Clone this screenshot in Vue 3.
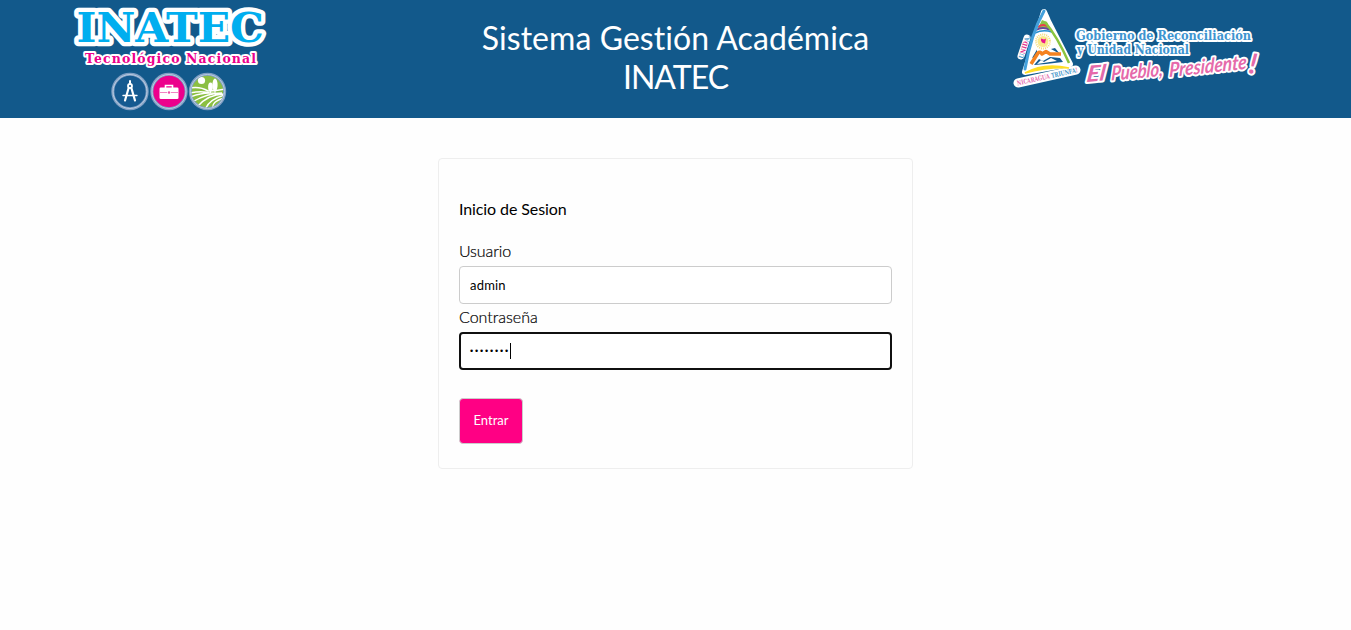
<script setup>
import { ref } from 'vue'

const user = ref('admin')
const masked = '•'.repeat(8)
</script>

<template>
  <div class="page">
    <header class="header">
      <svg class="brand" viewBox="60 0 220 118" role="img" aria-label="INATEC Tecnológico Nacional">
        <g class="slab outlined">
          <text class="inatec" x="76.500" y="41.500" textLength="187.500" lengthAdjust="spacingAndGlyphs">INATEC</text>
          <text class="tecno" x="85" y="63" textLength="171" lengthAdjust="spacing">Tecnológico Nacional</text>
        </g>
        <g stroke="#7f9fc4" stroke-width="3">
          <circle cx="130" cy="91.500" r="17.200" fill="#155a90" />
          <circle cx="169" cy="91.500" r="17.200" fill="#ec008c" />
          <circle cx="207.500" cy="91.500" r="17.200" fill="#8bbf42" />
        </g>
        <g fill="none" stroke="#b9cbe0" stroke-width="1">
          <circle cx="130" cy="91.500" r="17" />
          <circle cx="169" cy="91.500" r="17" />
          <circle cx="207.500" cy="91.500" r="17" />
        </g>
        <g fill="none" stroke="#fff" stroke-linecap="round">
          <path d="M130 81v2" stroke-width="2" />
          <circle cx="130" cy="86" r="2" stroke-width="1.800" />
          <path d="M128.500 88.500 L125 100.500M131.500 88.500 L135 100.500" stroke-width="2.200" />
          <path d="M123 95.500H137" stroke-width="1.400" />
        </g>
        <path d="M165.500 88v-2.500h7V88" fill="none" stroke="#fff" stroke-width="1.600" />
        <rect x="159.500" y="87.500" width="19" height="11.500" rx="1.300" fill="#fff" />
        <path d="M160 92.500h7m4 0h7" stroke="#ec4da9" stroke-width=".7" />
        <circle cx="169" cy="92.500" r="1.200" fill="#ec4da9" />
        <g clip-path="url(#fieldClip)">
          <circle cx="201.500" cy="80.500" r="3.600" fill="#fff" />
          <path d="M190 88 Q200 86 208 91 Q217 91 225 89" fill="none" stroke="#fff" stroke-width="1.500" />
          <g fill="#fff">
            <ellipse cx="210.500" cy="87" rx="2.400" ry="4.500" />
            <ellipse cx="215" cy="85" rx="2.600" ry="6.500" />
            <path d="M210 90h1v3h-1zM214.500 90h1v3h-1z" />
          </g>
          <g fill="none" stroke="#fff" stroke-width="1.400">
            <path d="M190 93 Q203 90 213 94M190 97 Q206 91 217 94M192 102 Q208 93 222 93M197 107 Q208 94 225 94M205 110 Q209 99 225 95M213 109 Q211 101 225 98" />
          </g>
        </g>
        <clipPath id="fieldClip"><circle cx="207.500" cy="91.500" r="16" /></clipPath>
      </svg>

      <h1 class="title"><span class="line first">Sistema Gestión Académica</span><span class="line second">INATEC</span></h1>

      <svg class="gov" viewBox="1000 0 270 118" role="img" aria-label="Gobierno de Reconciliación y Unidad Nacional">
        <g fill="#fff" stroke="#fff" stroke-linejoin="round">
          <path d="M1044 12L1025 72L1070 64L1048 21Z" stroke-width="6" />
          <path d="M1018 83L1076 70" stroke-width="9" stroke-linecap="round" />
          <path d="M1021 56L1027 38" stroke-width="7" stroke-linecap="round" />
        </g>
        <path d="M1041 21L1029 47L1026 65L1065 61L1053 32Z" fill="#fff" />
        <path d="M1037 30Q1044 26 1050 30L1047 22L1042 20Z" fill="#8bc34a" />
        <path d="M1038 27Q1043 23 1049 27" fill="none" stroke="#eb3d4e" stroke-width="2" />
        <path d="M1036 30Q1043 26 1050 30" fill="none" stroke="#66499e" stroke-width="2" />
        <path d="M1035 33Q1043 29 1052 32" fill="none" stroke="#278dce" stroke-width="1.500" />
        <circle cx="1043" cy="41.500" r="5.500" fill="#fae98b" />
        <circle cx="1043" cy="41.500" r="7" fill="none" stroke="#f5db73" stroke-width="2" stroke-dasharray="1 1" />
        <path d="M1041 38.500l3 1 2-1-1 5-3-1-1-2z" fill="#ec168c" />
        <path d="M1037 49.500L1032 58L1037 56Z M1051 49L1055 48L1060 54Z" fill="#155a90" />
        <path d="M1031 64L1038 53Q1040 51 1042 54L1046 51.500L1050 54L1061 54" fill="none" stroke="#f58220" stroke-width="3.500" stroke-linejoin="round" />
        <path d="M1034 65L1039 59L1043 61L1050 57L1060 58L1063 62L1046 64Z" fill="#155a90" />
        <path d="M1037 64L1041 60L1044 62L1051 58L1057 61L1050 62Z" fill="#fff" />
        <path d="M1044 11Q1031 34 1025 69" fill="none" stroke="#43a0dc" stroke-width="3" stroke-linecap="round" />
        <path d="M1045 22Q1057 36 1069 63" fill="none" stroke="#8bc53f" stroke-width="2.500" />
        <path d="M1025 73Q1044 62 1069 68Q1047 67 1025 73Z" fill="#ffdd25" stroke="#ffdd25" stroke-width="1.500" />
        <g class="slab motto">
          <text transform="translate(1017.500 85.500) rotate(-12.500)" textLength="62" lengthAdjust="spacingAndGlyphs"><tspan fill="#e46daf">NICARAGUA</tspan><tspan fill="#4796ca"> TRIUNFA</tspan><tspan fill="#e46daf">!</tspan></text>
          <text transform="translate(1023 59) rotate(-73)" textLength="24" lengthAdjust="spacingAndGlyphs"><tspan fill="#4796ca">U</tspan><tspan fill="#e42e8b">NID</tspan><tspan fill="#4796ca">A,</tspan></text>
        </g>
        <g class="slab outlined government">
          <text x="1076" y="40" textLength="175" lengthAdjust="spacingAndGlyphs">Gobierno de Reconciliación</text>
          <text x="1077" y="53.500" textLength="112" lengthAdjust="spacingAndGlyphs">y Unidad Nacional</text>
        </g>
        <g class="outlined slogan">
          <text class="el" transform="translate(1086 82) rotate(-5) skewX(-12)" textLength="19" lengthAdjust="spacingAndGlyphs">El</text>
          <text transform="translate(1111 80.500) rotate(-5) skewX(-8)" textLength="52" lengthAdjust="spacingAndGlyphs">Pueblo,</text>
          <text transform="translate(1169 77) rotate(-6) skewX(-8)" textLength="78" lengthAdjust="spacingAndGlyphs">Presidente</text>
          <text class="bang" transform="translate(1248 73) rotate(8)">!</text>
        </g>
      </svg>
    </header>

    <main class="login">
      <h2 class="heading">Inicio de Sesion</h2>
      <label class="label" for="user"><span class="t-user">Usuario</span></label>
      <input id="user" v-model="user" class="field" type="text" />
      <label class="label"><span class="t-pass">Contraseña</span></label>
      <div class="field focused" role="textbox"><span class="dots">{{ masked }}</span><span class="caret"></span></div>
      <button class="submit" type="button">Entrar</button>
    </main>
  </div>
</template>

<style>
body {
  background: #fefefe;
}
</style>

<style scoped>
.page {
  font-family: Lato, "Open Sans", sans-serif;
  color: #000;
}
.header {
  display: grid;
  grid-template-columns: 220px 1fr 270px;
  height: 118px;
  padding: 0 81px 0 60px;
  box-sizing: border-box;
  background: #12598b;
}
.brand,
.gov {
  display: block;
  width: 100%;
  height: 118px;
}
.slab {
  font-family: "DejaVu Serif", serif;
  font-weight: 700;
}
.outlined {
  paint-order: stroke;
  stroke: #fff;
  stroke-linejoin: round;
}
.inatec {
  font-size: 41px;
  fill: #00aeef;
  stroke-width: 8.5px;
}
.tecno {
  font-size: 12.5px;
  fill: #ec008c;
  stroke-width: 4px;
}
.government {
  font-size: 12.5px;
  font-weight: 700;
  fill: #3d94d0;
  stroke-width: 4px;
}
.motto {
  font-size: 6.5px;
}
.slogan {
  font-family: Lato, sans-serif;
  font-size: 20px;
  font-style: italic;
  font-weight: 700;
  fill: #e56aaa;
  stroke-width: 4px;
}
.slogan .el {
  font-size: 22px;
}
.slogan .bang {
  font-size: 28px;
}
.title {
  margin: 0;
  padding: 18px 0 0 71px;
  color: #fff;
  font-size: 32px;
  font-weight: 400;
  line-height: 39px;
  text-align: center;
}
.line {
  display: block;
  white-space: nowrap;
}
.first {
  letter-spacing: 0.06px;
}
.second {
  letter-spacing: -1px;
}
.login {
  width: 475px;
  height: 311px;
  margin: 40px 0 0 438px;
  padding: 39px 20px 0;
  box-sizing: border-box;
  border: 1px solid #eee;
  border-radius: 4px;
}
.heading {
  margin: 0 0 20px;
  font-size: 16px;
  font-weight: 400;
  letter-spacing: -0.1px;
  line-height: 22px;
}
.label {
  display: block;
  height: 28px;
  padding-top: 2px;
  box-sizing: border-box;
  font-size: 16px;
  font-weight: 300;
  line-height: 22px;
  -webkit-text-stroke: 0.2px #000;
}
.heading + .label {
  height: 26px;
  padding-top: 0;
}
.t-user {
  letter-spacing: -0.1px;
}
.field {
  display: flex;
  align-items: center;
  width: 433px;
  height: 38px;
  padding: 0 11px 1px 10px;
  box-sizing: border-box;
  border: 1px solid #ccc;
  border-radius: 4px;
  background: #fff;
  color: #000;
  font: 400 13px Lato, sans-serif;
  letter-spacing: 0.2px;
  outline: none;
}
.focused {
  padding-left: 9px;
  border: 2px solid #101010;
}
.dots {
  width: 40px;
  font: 9px/16px "Liberation Sans", sans-serif;
  letter-spacing: 1.85px;
  white-space: nowrap;
}
.caret {
  width: 1px;
  height: 16px;
  background: #000;
}
.submit {
  display: block;
  width: 64px;
  height: 46px;
  margin-top: 28px;
  padding: 0 0 2px;
  border: 1px solid #ccc;
  border-radius: 4px;
  background: #ff0084;
  color: #fff;
  font: 400 13px Lato, sans-serif;
}
</style>
